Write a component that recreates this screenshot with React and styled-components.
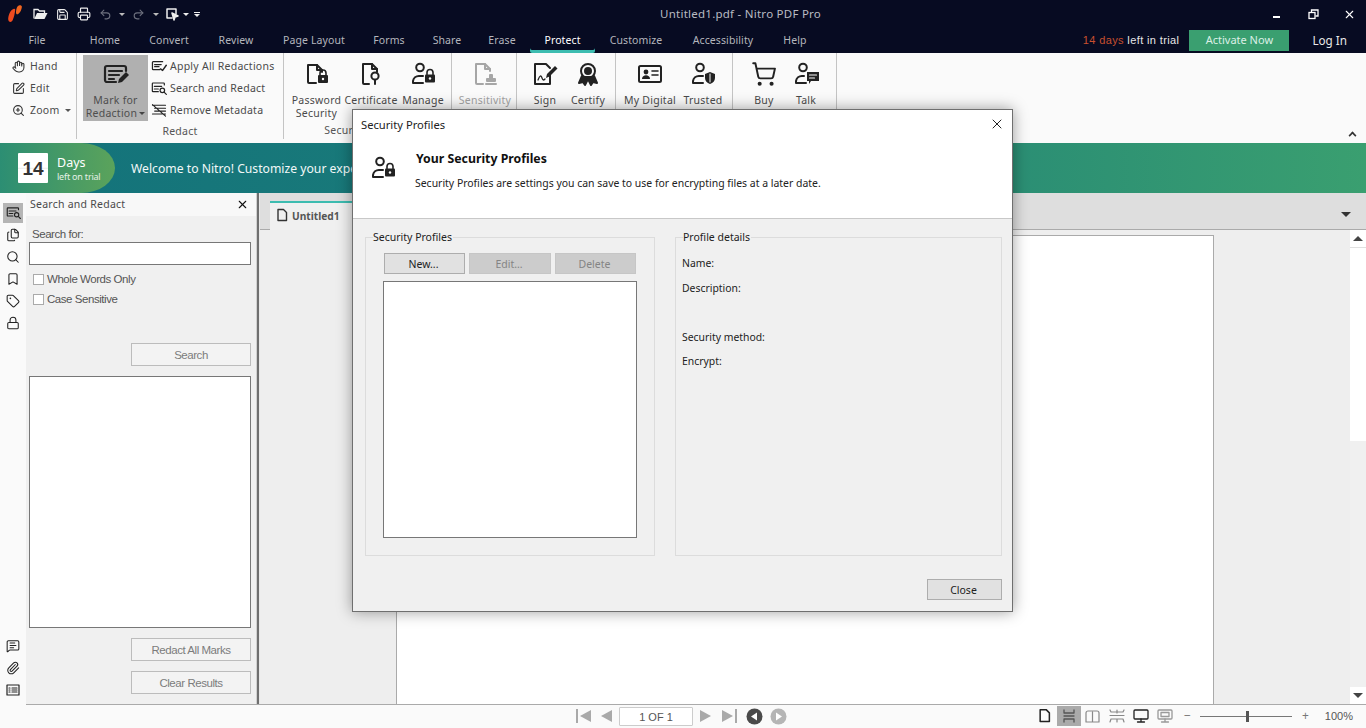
import React from "react";
import styled, { createGlobalStyle } from "styled-components";
import {
  Hand,
  SquarePen,
  ZoomIn,
  Files,
  Search,
  Bookmark,
  Tag,
  Lock,
  MessageSquareText,
  Paperclip,
  X,
  Undo2,
  Redo2,
  Printer,
  Save,
  ShoppingCart
} from "lucide-react";

const FONT = `"Noto Sans", "Open Sans", sans-serif`;

const GlobalStyle = createGlobalStyle`
  html, body { margin: 0; padding: 0; height: 100%; overflow: hidden; }
  #root { height: 728px; }
  * { box-sizing: border-box; }
  body { font-family: ${FONT}; font-size: 12px; color: #222; background: #fff; }
`;

const Page = styled.div`
  position: relative;
  width: 1366px;
  height: 728px;
  display: flex;
  flex-direction: column;
  overflow: hidden;
`;

/* title bar */
const TitleBar = styled.div`
  flex: 0 0 27px;
  background: #070b22;
  display: flex;
  align-items: center;
  position: relative;
  padding: 1px 0 0 8px;
`;
const QuickTools = styled.div`
  display: flex;
  align-items: center;
  color: #e8e8e8;
  margin-left: 7px;
`;
const QuickIcon = styled.span`
  display: inline-flex;
  flex-direction: column;
  align-items: center;
  gap: 1px;
  width: ${p => p.$w || 22}px;
  justify-content: center;
  color: ${p => (p.$dim ? "#6d707e" : "#eee")};
`;
const Caret = styled.span`
  display: inline-block;
  width: 0;
  height: 0;
  border-left: 3px solid transparent;
  border-right: 3px solid transparent;
  border-top: 3px solid ${p => p.$color || "#bbb"};
`;
const CaretBar = styled.span`
  display: block;
  width: 6px;
  height: 1px;
  background: #eee;
`;
const WindowTitle = styled.div`
  position: absolute;
  left: 660px;
  top: 6px;
  color: #b9bbc2;
  font-size: 11.5px;
  letter-spacing: 0.25px;
`;
const WindowButtons = styled.div`
  margin-left: auto;
  display: flex;
  align-items: center;
  padding-right: 7px;
  gap: 17px;
  color: #fff;
`;
const WinBtn = styled.span`
  display: inline-flex;
  width: 19px;
  justify-content: center;
`;

/* tabs */
const TabBar = styled.div`
  flex: 0 0 26px;
  min-height: 0;
  background: #070b22;
  display: flex;
  align-items: stretch;
  position: relative;
`;
const TabItem = styled.div`
  flex: 0 0 ${p => p.$w}px;
  height: 26px;
  text-align: center;
  font-size: 10.5px;
  letter-spacing: 0.1px;
  line-height: 26px;
  color: ${p => (p.$active ? "#fff" : "#b4b6bd")};
  box-shadow: ${p => (p.$active ? "inset 0 -3px 0 #3dbcb0" : "none")};
  border-radius: 2px;
`;
const TrialArea = styled.div`
  margin-left: auto;
  display: flex;
  align-items: center;
  padding-right: 19px;
`;
const TrialText = styled.span`
  font-family: "Liberation Sans", sans-serif;
  font-size: 11px;
  letter-spacing: 0.38px;
  color: #e6e6e6;
  margin-right: 10px;
  b { color: #c8502f; font-weight: 400; }
`;
const ActivateButton = styled.div`
  width: 100px;
  height: 21px;
  background: #3a9f70;
  color: #dcefe6;
  font-size: 11px;
  text-align: center;
  line-height: 20px;
  margin-right: 23px;
`;
const LogIn = styled.span`
  color: #e8e8e8;
  font-size: 11.7px;
`;

/* ribbon */
const Ribbon = styled.div`
  flex: 0 0 90px;
  background: #fafafa;
  display: flex;
  position: relative;
  font-size: 10.5px;
  letter-spacing: 0.25px;
  color: #4a4a4a;
`;
const RibbonGroup = styled.div`
  flex: 0 0 ${p => p.$w}px;
  height: 86px;
  border-right: 1px solid #c4c4c4;
  position: relative;
  display: flex;
  flex-direction: column;
`;
const GroupBody = styled.div`
  flex: 1;
  display: flex;
  padding: 1px 0 0 ${p => p.$pl || 0}px;
`;
const GroupLabel = styled.div`
  height: 24px;
  text-align: center;
  line-height: 20px;
  color: #555;
  white-space: nowrap;
`;
const SmallColumn = styled.div`
  display: flex;
  flex-direction: column;
  padding: 1px 0 0 ${p => p.$pl || 0}px;
`;
const SmallTool = styled.div`
  height: 22px;
  display: flex;
  align-items: center;
  gap: ${p => p.$gap || 5}px;
  white-space: nowrap;
  svg { flex: none; color: #333; }
`;
const SelectedTool = styled.div`
  width: 65px;
  height: 66px;
  margin: 1px 0 0 6px;
  background: #b0b0b0;
  display: flex;
  flex-direction: column;
  align-items: center;
  padding-top: 7px;
  text-align: center;
  line-height: 13px;
  color: #4e4e4e;
  svg { margin-bottom: 6px; }
`;
const BigTool = styled.div`
  flex: 0 0 ${p => p.$w}px;
  min-width: 0;
  display: flex;
  flex-direction: column;
  align-items: center;
  text-align: center;
  line-height: 13px;
  padding-top: 7px;
  white-space: nowrap;
  color: ${p => (p.$disabled ? "#a2a2a2" : "#4a4a4a")};
  svg { height: 26px; margin-bottom: 7px; }
`;
const Collapse = styled.span`
  position: absolute;
  right: 10px;
  bottom: 4px;
  width: 7px;
  height: 7px;
  border-top: 2px solid #333;
  border-left: 2px solid #333;
  transform: rotate(45deg) scale(0.8);
`;

/* banner */
const Banner = styled.div`
  flex: 0 0 50px;
  background: linear-gradient(90deg, #13727b 0%, #1d7f78 50%, #3a9f70 100%);
  display: flex;
  align-items: center;
`;
const DaysPill = styled.div`
  width: 115px;
  height: 50px;
  background: linear-gradient(90deg, #2c8e73 0%, #5ba35b 100%);
  border-radius: 0 34px 34px 0 / 0 25px 25px 0;
  display: flex;
  align-items: center;
  padding-left: 18px;
  color: #fff;
`;
const CalendarTile = styled.div`
  width: 30px;
  height: 30px;
  background: linear-gradient(180deg, #fff 0, #fff 48%, #e4e4e4 50%, #fff 54%);
  border-radius: 1px;
  color: #333;
  font-family: "Liberation Sans", sans-serif;
  font-weight: 700;
  font-size: 19px;
  line-height: 32px;
  text-align: center;
`;
const DaysText = styled.div`
  margin: 2px 0 0 9px;
  line-height: 1;
  span { display: block; font-size: 12.5px; margin-bottom: 2px; }
  small { display: block; font-size: 9px; letter-spacing: -0.2px; color: #e6f1e6; }
`;
const WelcomeText = styled.div`
  margin-left: 16px;
  color: #f2f8f8;
  font-size: 12.2px;
  white-space: nowrap;
`;

/* main */
const Main = styled.div`
  flex: 1;
  display: flex;
  min-height: 0;
`;
const Rail = styled.div`
  flex: 0 0 26px;
  background: #fafafa;
  display: flex;
  flex-direction: column;
  align-items: center;
  padding: 10px 0 2px;
  color: #222;
`;
const RailButton = styled.div`
  width: 20px;
  height: 20px;
  margin-bottom: 2px;
  display: flex;
  align-items: center;
  justify-content: center;
  background: ${p => (p.$active ? "#b5b5b5" : "transparent")};
`;
const RailSpacer = styled.div`
  flex: 1;
`;
const SidePanel = styled.div`
  flex: 0 0 230px;
  background: #f0f0f0;
  display: flex;
  flex-direction: column;
  font-family: "Liberation Sans", sans-serif;
  font-size: 11.5px;
  letter-spacing: -0.45px;
  color: #555;
`;
const PanelHeader = styled.div`
  height: 23px;
  background: #f8f8f8;
  display: flex;
  align-items: center;
  justify-content: space-between;
  padding: 0 7px 1px 4px;
  font-family: ${FONT};
  font-size: 10.5px;
  letter-spacing: 0.25px;
  color: #4a4a4a;
  svg { color: #111; }
`;
const PanelBody = styled.div`
  flex: 1;
  display: flex;
  flex-direction: column;
  padding: 10px 5px 10px 3px;
`;
const FieldLabel = styled.div`
  padding-left: 3px;
  line-height: 16px;
`;
const TextBox = styled.div`
  height: 23px;
  background: #fff;
  border: 1px solid #777;
`;
const CheckRow = styled.div`
  height: 20px;
  display: flex;
  align-items: center;
  padding-left: 4px;
  gap: 3px;
  margin-top: ${p => p.$mt || 0}px;
`;
const CheckBox = styled.span`
  width: 11px;
  height: 11px;
  background: #fff;
  border: 1px solid #aaa;
`;
const PanelButton = styled.div`
  width: 120px;
  height: 23px;
  align-self: flex-end;
  margin-top: ${p => p.$mt}px;
  border: 1px solid #bcbcbc;
  background: #f3f3f3;
  color: #7c7c7c;
  text-align: center;
  line-height: 22px;
`;
const ResultList = styled.div`
  height: 252px;
  margin-top: 10px;
  background: #fff;
  border: 1px solid #777;
`;
const Splitter = styled.div`
  flex: 0 0 4px;
  background: linear-gradient(90deg, #d0d0d0 0, #d0d0d0 1px, #6f6f6f 1px, #6f6f6f 3px, #e8e8e8 3px);
`;
const Workspace = styled.div`
  flex: 1;
  display: flex;
  flex-direction: column;
  min-width: 0;
`;
const DocTabs = styled.div`
  flex: 0 0 37px;
  background: #dedede;
  border-bottom: 1px solid #aaa;
  display: flex;
  align-items: flex-end;
  padding-left: 10px;
  position: relative;
`;
const DocTab = styled.div`
  width: 90px;
  height: 29px;
  margin-bottom: -1px;
  background: #f0f0f0;
  border-top: 2px solid #3dbcb0;
  display: flex;
  align-items: center;
  padding: 0 0 2px 6px;
  gap: 4px;
  font-size: 10.2px;
  font-weight: 700;
  color: #555;
  svg { color: #333; }
`;
const TabsMenu = styled.span`
  position: absolute;
  right: 15px;
  top: 19px;
  width: 0;
  height: 0;
  border-left: 5px solid transparent;
  border-right: 5px solid transparent;
  border-top: 5px solid #333;
`;
const DocArea = styled.div`
  flex: 1;
  display: flex;
  background: #eeeeee;
  min-height: 0;
  padding-top: 5px;
`;
const PageSheet = styled.div`
  flex: 0 0 818px;
  margin-left: 136px;
  background: #fff;
  border: 1px solid #aaa;
  border-bottom: 0;
`;
const ScrollBar = styled.div`
  margin-left: auto;
  flex: 0 0 16px;
  margin-top: -5px;
  background: #f0f0f0;
  display: flex;
  flex-direction: column;
  align-items: center;
`;
const ScrollThumb = styled.div`
  width: 16px;
  flex: 0 0 194px;
  background: #fff;
  border-top: 1px solid #e0e0e0;
`;
const ScrollTrack = styled.div`
  flex: 1;
  width: 16px;
  background: #f0f0f0;
`;
const ScrollArrow = styled.div`
  flex: none;
  width: 16px;
  height: 17px;
  background: #fff;
  display: flex;
  align-items: center;
  justify-content: center;
  &::after {
    content: "";
    border-left: 5px solid transparent;
    border-right: 5px solid transparent;
    ${p => (p.$up ? "border-bottom: 5px solid #444;" : "border-top: 5px solid #444;")}
  }
`;

/* status bar */
const StatusBar = styled.div`
  flex: 0 0 24px;
  background: #fafafa;
  display: flex;
  position: relative;
  align-items: center;
`;
const StatusLine = styled.div`
  position: absolute;
  left: 26px;
  right: 0;
  top: 0;
  height: 1px;
  background: #aaa;
`;
const Pager = styled.div`
  display: flex;
  align-items: center;
  margin-left: 576px;
  gap: 7px;
`;
const PageField = styled.div`
  width: 74px;
  height: 19px;
  background: #fff;
  border: 1px solid #ccc;
  border-radius: 1px;
  text-align: center;
  font-family: "Liberation Sans", sans-serif;
  font-size: 11px;
  line-height: 18px;
  color: #555;
`;
const PagerGap = styled.span`
  width: ${p => p.$w}px;
  margin-left: -7px;
`;
const ViewTools = styled.div`
  margin-left: auto;
  display: flex;
  align-items: center;
  padding-right: 13px;
  height: 20px;
`;
const ViewButton = styled.span`
  width: 24px;
  height: 20px;
  display: inline-flex;
  align-items: center;
  justify-content: center;
  background: ${p => (p.$active ? "#aaa" : "transparent")};
`;
const ZoomSign = styled.span`
  width: 11px;
  margin: 0 ${p => p.$r || 0}px 0 ${p => p.$l || 0}px;
  text-align: center;
  color: #777;
  font-size: 12px;
  line-height: 1;
`;
const ZoomTrack = styled.span`
  position: relative;
  width: 92px;
  height: 1px;
  background: #777;
  &::after {
    content: "";
    position: absolute;
    left: 46px;
    top: -5px;
    width: 3px;
    height: 11px;
    background: #555;
  }
`;
const ZoomValue = styled.span`
  font-family: "Liberation Sans", sans-serif;
  font-size: 11px;
  color: #555;
  margin-left: 14px;
`;

/* dialog */
const Dialog = styled.div`
  position: absolute;
  left: 352px;
  top: 109px;
  width: 661px;
  height: 503px;
  background: #f0f0f0;
  border: 1px solid #6f6f6f;
  box-shadow: 0 0 14px rgba(0, 0, 0, 0.38);
  display: flex;
  flex-direction: column;
  font-size: 10.5px;
  color: #222;
`;
const DialogTop = styled.div`
  flex: 0 0 109px;
  background: #fff;
  border-bottom: 1px solid #c8c8c8;
  position: relative;
`;
const DialogTitle = styled.div`
  height: 30px;
  padding: 7px 0 0 8px;
  font-size: 11.2px;
  color: #222;
`;
const DialogClose = styled.span`
  position: absolute;
  right: 7px;
  top: 6px;
  color: #111;
  display: inline-flex;
`;
const DialogHeading = styled.div`
  display: flex;
  padding: 10px 0 0 17px;
`;
const HeadIcon = styled.div`
  margin-top: 5px;
`;
const DialogHeadText = styled.div`
  margin-left: 19px;
  h1 {
    margin: 0 0 7px 1px;
    font-size: 12.3px;
    line-height: 18px;
    font-weight: 700;
    color: #111;
  }
  p {
    margin: 0;
    font-size: 10.45px;
    line-height: 16px;
  }
`;
const DialogBody = styled.div`
  flex: 1;
  display: flex;
  gap: 20px;
  padding: 10px 10px 0 12px;
`;
const GroupBox = styled.fieldset`
  margin: 0;
  flex: 0 0 ${p => p.$w}px;
  height: 327px;
  border: 1px solid #dcdcdc;
  padding: 8px 17px 0 17px;
  legend {
    margin-left: -10px;
    padding: 0 1px 0 0;
    line-height: 16px;
    font-size: 10.5px;
  }
`;
const ButtonRow = styled.div`
  display: flex;
  justify-content: space-between;
  margin: 0 1px 7px 1px;
`;
const DialogButton = styled.div`
  width: ${p => p.$w || 81}px;
  height: 21px;
  padding-right: 2px;
  text-align: center;
  line-height: 20px;
  font-size: 10.5px;
  border: 1px solid ${p => (p.$disabled ? "#c6c6c6" : "#adadad")};
  background: ${p => (p.$disabled ? "#cccccc" : "#e1e1e1")};
  color: ${p => (p.$disabled ? "#848484" : "#222")};
`;
const ProfileList = styled.div`
  height: 257px;
  background: #fff;
  border: 1px solid #777;
`;
const DetailList = styled.div`
  padding-top: 2px;
  font-size: 10.4px;
`;
const DetailRow = styled.div`
  line-height: 16px;
  margin: 0 0 ${p => p.$mb}px -11px;
`;
const DialogFooter = styled.div`
  flex: 0 0 44px;
  display: flex;
  align-items: flex-start;
  justify-content: flex-end;
  padding: 12px 10px 0 0;
`;

/* ---- drawings ---- */
const Svg = ({ w = 26, h = 26, vb = "0 0 26 26", children, sw = 2, color = "#222" }) => (
  <svg width={w} height={h} viewBox={vb} fill="none" stroke={color} strokeWidth={sw} strokeLinecap="round" strokeLinejoin="round">
    {children}
  </svg>
);

const PadLock = ({ x, y, color = "#222" }) => (
  <g>
    <path d={`M${x + 2} ${y + 4}v-2a3 3 0 0 1 6 0v2`} stroke={color} strokeWidth="1.6" fill="none" />
    <rect x={x} y={y + 4} width="10" height="8" rx="1" fill={color} stroke="none" />
    <circle cx={x + 5} cy={y + 8} r="1.2" fill="#fafafa" stroke="none" />
  </g>
);

const MarkIcon = ({ size = 26 }) => (
  <Svg w={size} h={size} sw={2.2}>
    <path d="M13 20H4a2 2 0 0 1-2-2V6a2 2 0 0 1 2-2h17a2 2 0 0 1 2 2v3" />
    <path d="M6 9h13M6 13h10M6 17h5" />
    <path d="M15 21l1-4 7-7 3 3-7 7z" fill="#222" stroke="none" />
  </Svg>
);
const DocLockIcon = () => (
  <Svg>
    <path d="M12 22H5a1 1 0 0 1-1-1V4h9l5 5v2" />
    <path d="M13 4v5h5" />
    <PadLock x={14} y={10} />
  </Svg>
);
const DocPinIcon = () => (
  <Svg>
    <path d="M11 23H6a1 1 0 0 1-1-1V3h9l5 5v3" />
    <path d="M14 3v5h5" />
    <circle cx="17" cy="15" r="3.6" />
    <path d="M17 19v4" />
  </Svg>
);
const PersonLockIcon = ({ size = 26 }) => (
  <Svg w={size} h={size}>
    <circle cx="10" cy="6.5" r="3.8" />
    <path d="M13 22H3v-2a6 6 0 0 1 6-5h4" />
    <PadLock x={15} y={9.5} />
  </Svg>
);
const DocStampIcon = () => (
  <Svg color="#a6a6a6">
    <path d="M11 23H5a1 1 0 0 1-1-1V3h9l5 5v2" />
    <path d="M13 3v5h5" />
    <path d="M14 23h10M15 20h8v-2h-3v-4h-2v4h-3z" fill="#a6a6a6" />
  </Svg>
);
const SignIcon = () => (
  <Svg>
    <path d="M18 12v11H3V3h11l4 4" />
    <path d="M6 19c2-5 3-5 4-2s2 2 3 1" strokeWidth="1.3" />
    <path d="M14 17l1-4 8-8 2.500 2.500-8 8z" fill="#222" stroke="none" />
  </Svg>
);
const RibbonIcon = () => (
  <Svg>
    <circle cx="13" cy="10" r="7" />
    <circle cx="13" cy="10" r="3" fill="#222" />
    <path d="M7 15l-3 7 4-1 2 3 3-6 3 6 2-3 4 1-3-7" fill="#222" />
  </Svg>
);
const IdCardIcon = () => (
  <Svg>
    <rect x="2" y="5" width="22" height="16" rx="1.5" />
    <circle cx="9" cy="11" r="2.4" fill="#222" stroke="none" />
    <path d="M5 18c0-5 8-5 8 0z" fill="#222" stroke="none" />
    <path d="M15 10h6M15 14h6" strokeWidth="1.6" />
  </Svg>
);
const PersonShieldIcon = () => (
  <Svg>
    <circle cx="10" cy="6.5" r="3.8" />
    <path d="M13 22H3v-2a6 6 0 0 1 6-5h4" />
    <path d="M20 11l5 2v4c0 3-2 5-5 6-3-1-5-3-5-6v-4z" fill="#222" stroke="none" />
    <path d="M20 13v8" stroke="#fafafa" strokeWidth="1" />
  </Svg>
);
const PersonChatIcon = () => (
  <Svg>
    <circle cx="10" cy="6.5" r="3.8" />
    <path d="M13 22H3v-2a6 6 0 0 1 6-5h2" />
    <path d="M14 11h12v9h-8l-2 3v-3h-2z" fill="#222" stroke="none" />
    <path d="M16.500 14h7M16.500 17h5" stroke="#fafafa" strokeWidth="1.2" />
  </Svg>
);
const ApplyIcon = () => (
  <Svg w={16} h={14} vb="0 0 22 18" sw={1.7}>
    <path d="M16 3H3a1 1 0 0 0-1 1v9a1 1 0 0 0 1 1h9" />
    <path d="M5 7h9M5 10h6" />
    <path d="M13 13l3 2 5-7" strokeWidth="2" />
  </Svg>
);
const SearchRedactIcon = ({ size = 16 }) => (
  <Svg w={size} h={size * 0.875} vb="0 0 24 21" sw={1.8}>
    <path d="M20 6V4a1 1 0 0 0-1-1H3a1 1 0 0 0-1 1v11a1 1 0 0 0 1 1h8" />
    <path d="M5 8h11M5 12h6" />
    <circle cx="17" cy="14" r="3.4" />
    <path d="M20 17l3 3" />
  </Svg>
);
const MetadataIcon = () => (
  <Svg w={16} h={14} vb="0 0 22 19" sw={1.5}>
    <path d="M2 3h18M5 7h15M5 11h15M2 15h18M2 2l18 16" />
  </Svg>
);
const LogoMark = () => (
  <svg width="14" height="18" viewBox="0 0 14 18">
    <path d="M5.500 4C2.500 5 .8 9 .2 13.500c-.3 3.500 3 4.500 4.300 2 1.500-3 2.300-7 2.700-10.500C7.400 4.200 6.700 3.600 5.500 4z" fill="#ee4a1f" />
    <path d="M11 .4C9 .8 8.300 4 8 7c-.2 2.200 1.200 3 2.500 1.800 1.800-1.500 3-4 3.400-6.800C14 .6 12.500 .1 11 .4z" fill="#f0651f" />
  </svg>
);
const OpenFolderIcon = () => (
  <svg width="15" height="12" viewBox="0 0 15 12" fill="none" stroke="#eee" strokeWidth="1.3">
    <path d="M1 10.500V1.500h4l1.500 1.500h5v2" />
    <path d="M1.200 11h10.300l3-6H4z" fill="#eee" stroke="none" />
  </svg>
);
const SelectToolIcon = () => (
  <Svg w={14} h={14} vb="0 0 14 14" sw={1.5} color="#eee">
    <path d="M7 11H2V2h9v5" />
    <path d="M7 6l6 3-3 1-1 3z" fill="#eee" />
  </Svg>
);
const PageGlyph = ({ size = 12, color = "#333" }) => (
  <Svg w={size} h={size * 1.17} vb="0 0 12 14" sw={1.4} color={color}>
    <path d="M2 1.500h5.500L10.500 4.500v8H2z" />
  </Svg>
);
const ListIcon = () => (
  <Svg w={14} h={12} vb="0 0 14 12" sw={1.2}>
    <rect x="1" y="1" width="12" height="10" />
    <path d="M3 4h1M6 4h5M3 6h1M6 6h5M3 8h1M6 8h5" />
  </Svg>
);
const SkipGlyph = ({ flip, color = "#a9a9a9" }) => (
  <svg width="15" height="14" viewBox="0 0 15 14" style={flip ? { transform: "scaleX(-1)" } : undefined}>
    <rect x="0" y="0" width="2" height="14" fill={color} />
    <path d="M15 1v12L4 7z" fill={color} />
  </svg>
);
const StepGlyph = ({ flip, color = "#a9a9a9" }) => (
  <svg width="12" height="14" viewBox="0 0 12 14" style={flip ? { transform: "scaleX(-1)" } : undefined}>
    <path d="M12 1v12L1 7z" fill={color} />
  </svg>
);
const RoundGlyph = ({ flip, color }) => (
  <svg width="17" height="17" viewBox="0 0 17 17" style={flip ? { transform: "scaleX(-1)" } : undefined}>
    <circle cx="8.500" cy="8.500" r="8" fill={color} />
    <path d="M11 4.500v8L5 8.500z" fill="#fff" />
  </svg>
);
const SinglePageIcon = () => <PageGlyph size={13} color="#222" />;
const ContinuousIcon = () => (
  <Svg w={14} h={14} vb="0 0 14 14" sw={1.3} color="#555">
    <path d="M2 1v3h10V1M2 13v-3h10v3M2 7h10" />
  </Svg>
);
const FacingIcon = () => (
  <Svg w={15} h={14} vb="0 0 15 14" sw={1.2} color="#888">
    <path d="M7.500 3v10M1 13V4a2 2 0 0 1 2-2h9a2 2 0 0 1 2 2v9z" />
  </Svg>
);
const FacingContIcon = () => (
  <Svg w={16} h={14} vb="0 0 16 14" sw={1.2} color="#888">
    <path d="M1 1l1 2h12l1-2M1 6.500h14M1 13l1-3h12l1 3M8 1v3M8 10v3" />
  </Svg>
);
const MonitorIcon = ({ color = "#222", inner }) => (
  <Svg w={16} h={14} vb="0 0 16 14" sw={1.3} color={color}>
    <rect x="1" y="1" width="14" height="9" rx="1" />
    <path d="M8 10v3M4.500 13h7" />
    {inner && <rect x="4" y="3.500" width="8" height="4" />}
  </Svg>
);

const tabs = [
  ["File", 74, false],
  ["Home", 62],
  ["Convert", 66],
  ["Review", 68],
  ["Page Layout", 88],
  ["Forms", 62],
  ["Share", 54],
  ["Erase", 56],
  ["Protect", 65, true],
  ["Customize", 82],
  ["Accessibility", 92],
  ["Help", 52]
];

const railTop = [
  [<SearchRedactIcon key="a" size={15} />, true],
  [<Files key="b" size={14} strokeWidth={1.8} />],
  [<Search key="c" size={14} strokeWidth={1.8} />],
  [<Bookmark key="d" size={14} strokeWidth={1.8} />],
  [<Tag key="e" size={14} strokeWidth={1.8} />],
  [<Lock key="f" size={14} strokeWidth={1.8} />]
];

const App = () => (
  <Page>
    <GlobalStyle />
    <TitleBar>
      <LogoMark />
      <QuickTools>
        <QuickIcon><OpenFolderIcon /></QuickIcon>
        <QuickIcon><Save size={13} /></QuickIcon>
        <QuickIcon><Printer size={14} /></QuickIcon>
        <QuickIcon $dim $w={21}><Undo2 size={13} /></QuickIcon>
        <QuickIcon $w={12}><Caret /></QuickIcon>
        <QuickIcon $dim $w={21}><Redo2 size={13} /></QuickIcon>
        <QuickIcon $w={14}><Caret /></QuickIcon>
        <QuickIcon $w={18}><SelectToolIcon /></QuickIcon>
        <QuickIcon $w={9}><Caret $color="#eee" /></QuickIcon>
        <QuickIcon $w={14}><CaretBar /><Caret $color="#eee" /></QuickIcon>
      </QuickTools>
      <WindowTitle>Untitled1.pdf - Nitro PDF Pro</WindowTitle>
      <WindowButtons>
        <WinBtn>
          <svg width="10" height="10" viewBox="0 0 10 10"><rect x="0" y="7" width="7" height="2" fill="#fff" /></svg>
        </WinBtn>
        <WinBtn>
          <svg width="11" height="11" viewBox="0 0 11 11" fill="none" stroke="#fff" strokeWidth="1.300">
            <rect x="1" y="3.500" width="6" height="6" />
            <path d="M3.500 3V1H10v6H7.500" />
          </svg>
        </WinBtn>
        <WinBtn><X size={13} strokeWidth={2} /></WinBtn>
      </WindowButtons>
    </TitleBar>

    <TabBar>
      {tabs.map(([name, w, active]) => (
        <TabItem key={name} $w={w} $active={active}>{name}</TabItem>
      ))}
      <TrialArea>
        <TrialText><b>14 days</b> left in trial</TrialText>
        <ActivateButton>Activate Now</ActivateButton>
        <LogIn>Log In</LogIn>
      </TrialArea>
    </TabBar>

    <Ribbon>
      <RibbonGroup $w={77}>
        <GroupBody $pl={12}>
          <SmallColumn>
            <SmallTool><Hand size={13} />Hand</SmallTool>
            <SmallTool><SquarePen size={13} />Edit</SmallTool>
            <SmallTool><ZoomIn size={13} />Zoom <Caret $color="#555" /></SmallTool>
          </SmallColumn>
        </GroupBody>
      </RibbonGroup>
      <RibbonGroup $w={207}>
        <GroupBody>
          <SelectedTool>
            <MarkIcon />
            <span>Mark for</span>
            <span>Redaction<Caret $color="#444" style={{ marginLeft: 2, verticalAlign: 2 }} /></span>
          </SelectedTool>
          <SmallColumn $pl={3}>
            <SmallTool $gap={3}><ApplyIcon />Apply All Redactions</SmallTool>
            <SmallTool $gap={3}><SearchRedactIcon />Search and Redact</SmallTool>
            <SmallTool $gap={3}><MetadataIcon />Remove Metadata</SmallTool>
          </SmallColumn>
        </GroupBody>
        <GroupLabel>Redact</GroupLabel>
      </RibbonGroup>
      <RibbonGroup $w={168}>
        <GroupBody $pl={4}>
          <BigTool $w={57}><DocLockIcon /><span>Password</span><span>Security</span></BigTool>
          <BigTool $w={52}><DocPinIcon /><span>Certificate</span></BigTool>
          <BigTool $w={52}><PersonLockIcon /><span>Manage</span><span>Profiles</span></BigTool>
        </GroupBody>
        <GroupLabel>Security Settings</GroupLabel>
      </RibbonGroup>
      <RibbonGroup $w={63}>
        <GroupBody $pl={2}><BigTool $w={62} $disabled><DocStampIcon /><span>Sensitivity</span></BigTool></GroupBody>
      </RibbonGroup>
      <RibbonGroup $w={99}>
        <GroupBody $pl={7}>
          <BigTool $w={42}><SignIcon /><span>Sign</span></BigTool>
          <BigTool $w={44}><RibbonIcon /><span>Certify</span></BigTool>
        </GroupBody>
      </RibbonGroup>
      <RibbonGroup $w={117}>
        <GroupBody $pl={6}>
          <BigTool $w={56}><IdCardIcon /><span>My Digital</span><span>IDs</span></BigTool>
          <BigTool $w={50}><PersonShieldIcon /><span>Trusted</span><span>Contacts</span></BigTool>
        </GroupBody>
      </RibbonGroup>
      <RibbonGroup $w={104}>
        <GroupBody $pl={10}>
          <BigTool $w={42}><ShoppingCart size={26} strokeWidth={1.8} color="#222" /><span>Buy</span><span>Now</span></BigTool>
          <BigTool $w={42}><PersonChatIcon /><span>Talk</span><span>to Sales</span></BigTool>
        </GroupBody>
      </RibbonGroup>
      <Collapse />
    </Ribbon>

    <Banner>
      <DaysPill>
        <CalendarTile>14</CalendarTile>
        <DaysText>
          <span>Days</span>
          <small>left on trial</small>
        </DaysText>
      </DaysPill>
      <WelcomeText>Welcome to Nitro! Customize your experience</WelcomeText>
    </Banner>

    <Main>
      <Rail>
        {railTop.map(([icon, active], i) => (
          <RailButton key={i} $active={active}>{icon}</RailButton>
        ))}
        <RailSpacer />
        <RailButton><MessageSquareText size={14} strokeWidth={1.8} /></RailButton>
        <RailButton><Paperclip size={14} strokeWidth={1.8} /></RailButton>
        <RailButton><ListIcon /></RailButton>
      </Rail>
      <SidePanel>
        <PanelHeader>
          Search and Redact
          <X size={13} strokeWidth={2} />
        </PanelHeader>
        <PanelBody>
          <FieldLabel>Search for:</FieldLabel>
          <TextBox />
          <CheckRow $mt={4}><CheckBox />Whole Words Only</CheckRow>
          <CheckRow><CheckBox />Case Sensitive</CheckRow>
          <PanelButton $mt={34}>Search</PanelButton>
          <ResultList />
          <PanelButton $mt={10}>Redact All Marks</PanelButton>
          <PanelButton $mt={10}>Clear Results</PanelButton>
        </PanelBody>
      </SidePanel>
      <Splitter />
      <Workspace>
        <DocTabs>
          <DocTab><PageGlyph />Untitled1</DocTab>
          <TabsMenu />
        </DocTabs>
        <DocArea>
          <PageSheet />
          <ScrollBar>
            <ScrollArrow $up />
            <ScrollThumb />
            <ScrollTrack />
            <ScrollArrow />
          </ScrollBar>
        </DocArea>
      </Workspace>
    </Main>

    <StatusBar>
      <StatusLine />
      <Pager>
        <SkipGlyph />
        <PagerGap $w={2} />
        <StepGlyph />
        <PageField>1 OF 1</PageField>
        <StepGlyph flip />
        <PagerGap $w={3} />
        <SkipGlyph flip />
        <PagerGap $w={2} />
        <RoundGlyph color="#4a4a4a" />
        <RoundGlyph flip color="#b5b5b5" />
      </Pager>
      <ViewTools>
        <ViewButton><SinglePageIcon /></ViewButton>
        <ViewButton $active><ContinuousIcon /></ViewButton>
        <ViewButton><FacingIcon /></ViewButton>
        <ViewButton><FacingContIcon /></ViewButton>
        <ViewButton><MonitorIcon /></ViewButton>
        <ViewButton><MonitorIcon color="#999" inner /></ViewButton>
        <ZoomSign $l={5} $r={7}>−</ZoomSign>
        <ZoomTrack />
        <ZoomSign $l={8}>+</ZoomSign>
        <ZoomValue>100%</ZoomValue>
      </ViewTools>
    </StatusBar>

    <Dialog>
      <DialogTop>
        <DialogTitle>Security Profiles</DialogTitle>
        <DialogClose><X size={16} strokeWidth={1.4} /></DialogClose>
        <DialogHeading>
          <HeadIcon><PersonLockIcon size={26} /></HeadIcon>
          <DialogHeadText>
            <h1>Your Security Profiles</h1>
            <p>Security Profiles are settings you can save to use for encrypting files at a later date.</p>
          </DialogHeadText>
        </DialogHeading>
      </DialogTop>
      <DialogBody>
        <GroupBox $w={290}>
          <legend>Security Profiles</legend>
          <ButtonRow>
            <DialogButton>New...</DialogButton>
            <DialogButton $w={82} $disabled>Edit...</DialogButton>
            <DialogButton $disabled>Delete</DialogButton>
          </ButtonRow>
          <ProfileList />
        </GroupBox>
        <GroupBox $w={327}>
          <legend>Profile details</legend>
          <DetailList>
            <DetailRow $mb={9}>Name:</DetailRow>
            <DetailRow $mb={33}>Description:</DetailRow>
            <DetailRow $mb={8}>Security method:</DetailRow>
            <DetailRow $mb={0}>Encrypt:</DetailRow>
          </DetailList>
        </GroupBox>
      </DialogBody>
      <DialogFooter>
        <DialogButton $w={75}>Close</DialogButton>
      </DialogFooter>
    </Dialog>
  </Page>
);

export default App;
